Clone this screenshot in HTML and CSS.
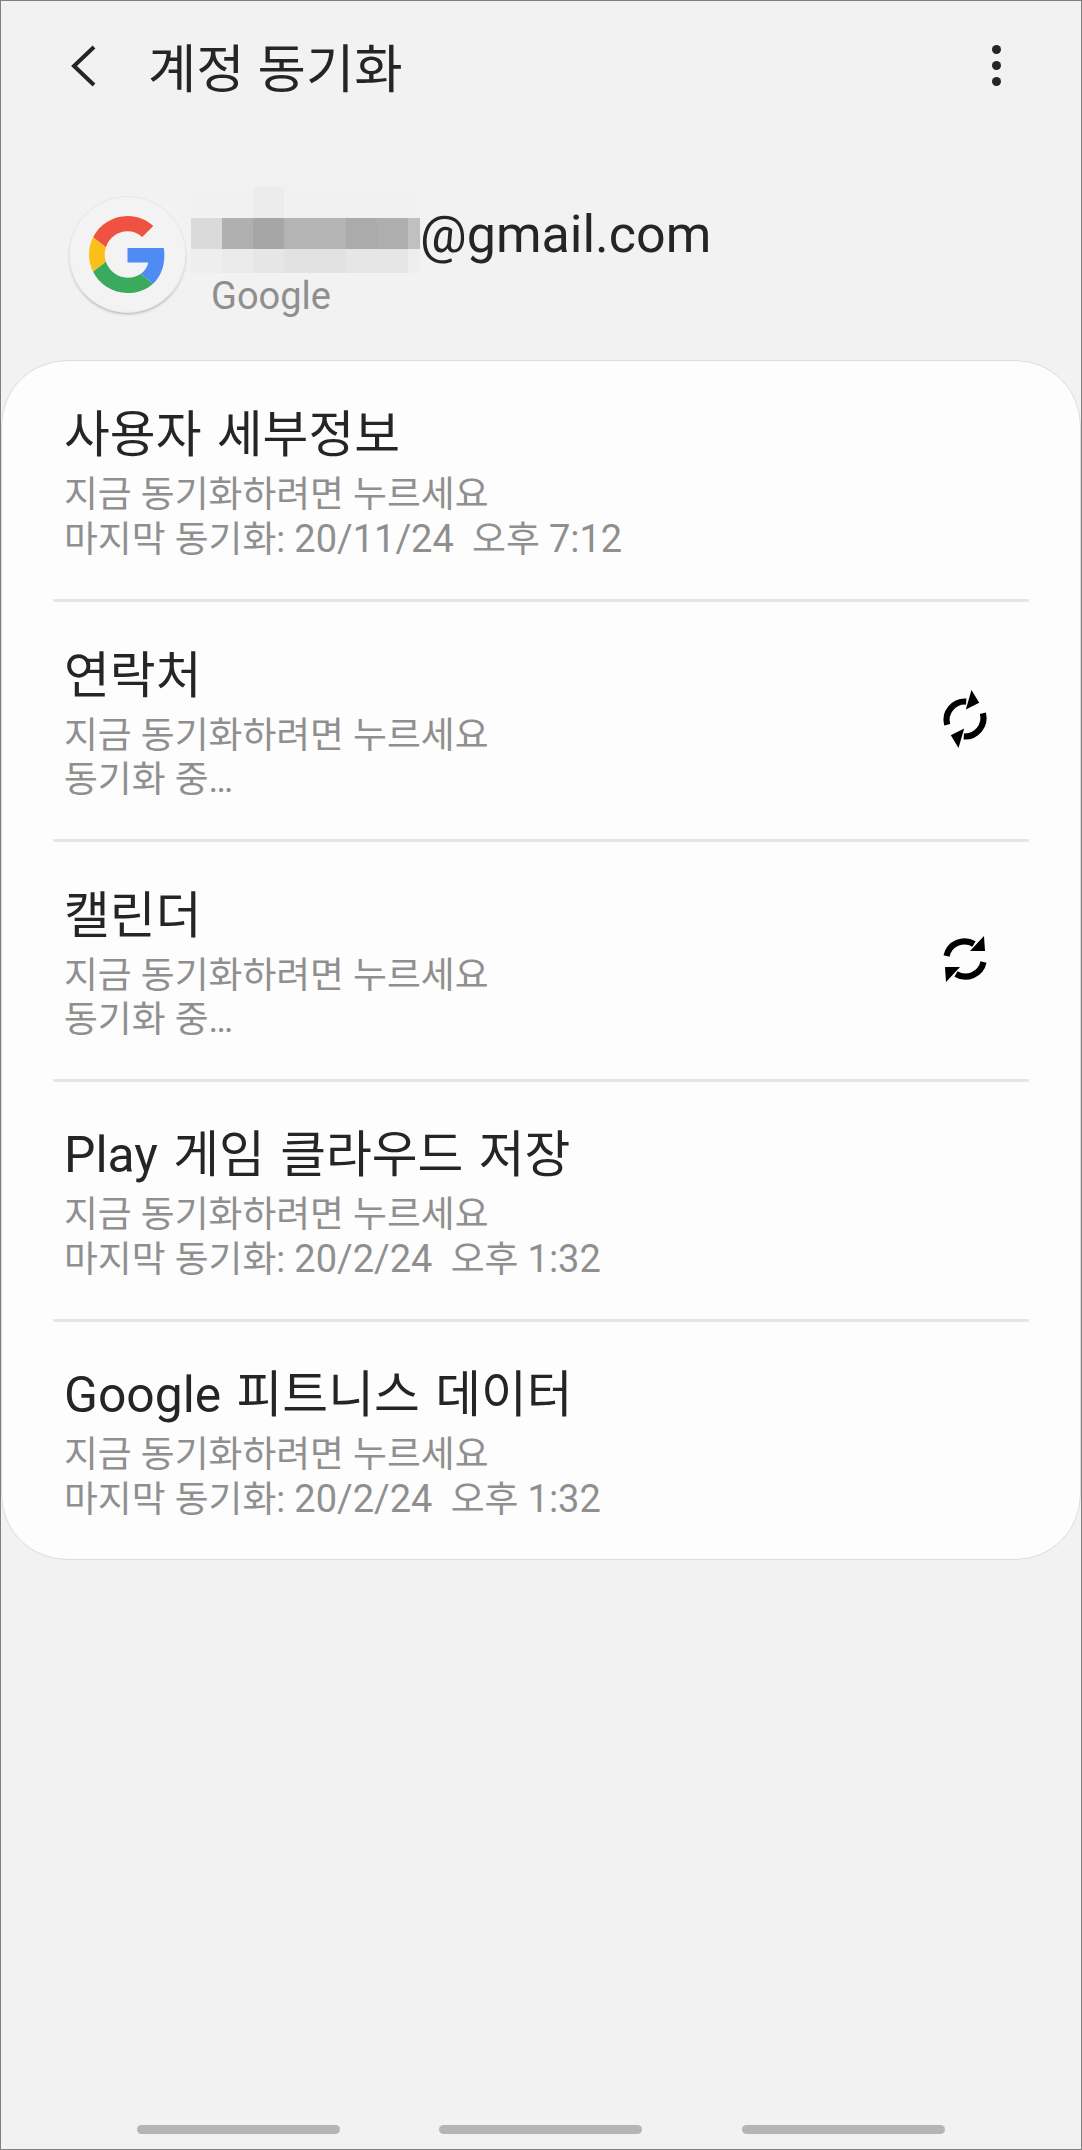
FILE: index.html
```html
<!DOCTYPE html>
<html lang="ko">
<head>
<meta charset="utf-8">
<title>계정 동기화</title>
<link rel="stylesheet" href="styles.css">
</head>
<body>
<div class="screen">
  <header class="topbar">
    <svg class="back" viewBox="0 0 28 44" width="28" height="44"><path d="M25 3 L5 22 L25 41" /></svg>
    <h1 class="page-title">계정 동기화</h1>
    <div class="more"><i></i><i></i><i></i></div>
  </header>

  <section class="account">
    <div class="avatar">
      <svg viewBox="0 0 48 48" width="77" height="77">
        <path fill="#EF5241" d="M24 9.5c3.54 0 6.71 1.22 9.21 3.6l6.85-6.85C35.9 2.38 30.47 0 24 0 14.62 0 6.51 5.38 2.56 13.22l7.98 6.19C12.43 13.72 17.74 9.5 24 9.5z"/>
        <path fill="#4F8BF5" d="M46.98 24.55c0-1.57-.15-3.09-.38-4.55H24v9.02h12.94c-.58 2.96-2.26 5.48-4.78 7.18l7.73 6c4.51-4.18 7.09-10.36 7.09-17.65z"/>
        <path fill="#FBBF1B" d="M10.53 28.59c-.48-1.45-.76-2.99-.76-4.59s.27-3.14.76-4.59l-7.98-6.19C.92 16.46 0 20.12 0 24c0 3.88.92 7.54 2.56 10.78l7.97-6.19z"/>
        <path fill="#3AAA5C" d="M24 48c6.48 0 11.93-2.13 15.89-5.81l-7.73-6c-2.15 1.45-4.92 2.3-8.16 2.3-6.26 0-11.57-4.22-13.47-9.91l-7.98 6.19C6.51 42.62 14.62 48 24 48z"/>
      </svg>
    </div>
    <div class="account-text">
      <div class="email-row">
        <div class="mosaic" aria-hidden="true">
          <b class="t0"></b><b class="t0"></b><b class="t1"></b><b class="t0"></b><b class="t0"></b><b class="t0"></b><b class="t0"></b><b class="t0"></b>
          <b class="m0"></b><b class="m1"></b><b class="m2"></b><b class="m3"></b><b class="m3"></b><b class="m4"></b><b class="m5"></b><b class="m6"></b>
          <b class="b0"></b><b class="b1"></b><b class="b2"></b><b class="b3"></b><b class="b3"></b><b class="b2"></b><b class="b2"></b><b class="b0"></b>
        </div>
        <span class="email">@gmail.com</span>
      </div>
      <div class="provider">Google</div>
    </div>
  </section>

  <main class="card">
    <div class="row">
      <div class="row-text">
        <div class="row-title">사용자 세부정보</div>
        <div class="row-sub">지금 동기화하려면 누르세요</div>
        <div class="row-sub">마지막 동기화: <span class="num">20/11/24</span>&nbsp; 오후 <span class="num">7:12</span></div>
      </div>
    </div>
    <div class="row">
      <div class="row-text">
        <div class="row-title">연락처</div>
        <div class="row-sub">지금 동기화하려면 누르세요</div>
        <div class="row-sub">동기화 중…</div>
      </div>
      <svg class="sync sync-turned" viewBox="-32 -32 64 64" width="64" height="64">
        <g><path class="arc" d="M-18.5 -3 A18.5 18.5 0 0 1 9 -15"/><path class="head" d="M19 -23 L20 -8 L5 -8 Z"/></g>
        <g transform="rotate(180)"><path class="arc" d="M-18.5 -3 A18.5 18.5 0 0 1 9 -15"/><path class="head" d="M19 -23 L20 -8 L5 -8 Z"/></g>
      </svg>
    </div>
    <div class="row">
      <div class="row-text">
        <div class="row-title">캘린더</div>
        <div class="row-sub">지금 동기화하려면 누르세요</div>
        <div class="row-sub">동기화 중…</div>
      </div>
      <svg class="sync" viewBox="-32 -32 64 64" width="64" height="64">
        <g><path class="arc" d="M-18.5 -3 A18.5 18.5 0 0 1 9 -15"/><path class="head" d="M19 -23 L20 -8 L5 -8 Z"/></g>
        <g transform="rotate(180)"><path class="arc" d="M-18.5 -3 A18.5 18.5 0 0 1 9 -15"/><path class="head" d="M19 -23 L20 -8 L5 -8 Z"/></g>
      </svg>
    </div>
    <div class="row">
      <div class="row-text">
        <div class="row-title">Play 게임 클라우드 저장</div>
        <div class="row-sub">지금 동기화하려면 누르세요</div>
        <div class="row-sub">마지막 동기화: <span class="num">20/2/24</span>&nbsp; 오후 <span class="num">1:32</span></div>
      </div>
    </div>
    <div class="row">
      <div class="row-text">
        <div class="row-title">Google 피트니스 데이터</div>
        <div class="row-sub">지금 동기화하려면 누르세요</div>
        <div class="row-sub">마지막 동기화: <span class="num">20/2/24</span>&nbsp; 오후 <span class="num">1:32</span></div>
      </div>
    </div>
  </main>

  <footer class="navbar"><i></i><i></i><i></i></footer>
</div>
</body>
</html>
```
FILE: styles.css
```css
* { box-sizing: border-box; }
html, body { margin: 0; padding: 0; }
body {
  font-family: Roboto, "Noto Sans CJK KR", sans-serif;
  background: #f2f2f2;
}
.screen {
  width: 1082px;
  height: 2150px;
  border: 1px solid #808080;
  background: #f2f2f2;
  display: flex;
  flex-direction: column;
  overflow: hidden;
}

/* top bar */
.topbar {
  height: 130px;
  display: flex;
  align-items: center;
  padding: 0 0 0 68px;
  flex: none;
}
.back { flex: none; }
.back path { fill: none; stroke: #252525; stroke-width: 4; }
.page-title {
  margin: 8px 0 0 51px;
  font-size: 52.5px;
  line-height: 60px;
  font-weight: 400;
  color: #252525;
  flex: 1;
}
.more {
  display: flex;
  flex-direction: column;
  gap: 6.5px;
  margin-right: 80px;
  margin-top: -1px;
}
.more i {
  display: block;
  width: 9.5px;
  height: 9.5px;
  border-radius: 50%;
  background: #252525;
}

/* account */
.account {
  height: 173px;
  margin-top: 56px;
  padding-left: 69px;
  display: flex;
  gap: 6px;
  flex: none;
}
.avatar {
  width: 115px;
  height: 115px;
  margin-top: 10px;
  border-radius: 50%;
  background: #f3f3f3;
  box-shadow: 0 0 0 1px #e9e9e9, 0 2px 3px rgba(0, 0, 0, .3);
  display: flex;
  align-items: center;
  justify-content: center;
  flex: none;
}
.account-text { display: flex; flex-direction: column; }
.email-row { display: flex; height: 86px; }
.mosaic {
  width: 229px;
  display: grid;
  grid-template-columns: repeat(7, 31px) 12px;
  grid-template-rows: 31px 31px 24px;
  flex: none;
}
.t0 { background: #f1f1f1; }
.t1 { background: #ececec; }
.m0 { background: #dadada; }
.m1 { background: #b0b0b0; }
.m2 { background: #a6a6a6; }
.m3 { background: #b4b4b4; }
.m4 { background: #ababab; }
.m5 { background: #aeaeae; }
.m6 { background: #c0c0c0; }
.b0 { background: #eeeeee; }
.b1 { background: #ebebeb; }
.b2 { background: #e6e6e6; }
.b3 { background: #e2e2e2; }
.email {
  font-size: 52px;
  line-height: 60px;
  color: #252525;
  margin-top: 18px;
  white-space: nowrap;
}
.provider {
  margin: 1px 0 0 20px;
  font-size: 38px;
  line-height: 44px;
  color: #8f8f8f;
}

/* list card */
.card {
  background: #fdfdfd;
  border: 1px solid #dcdcdc;
  border-radius: 66px;
  padding-top: 1px;
  flex: none;
}
.row {
  height: 240px;
  margin: 0 51px;
  padding: 0 32px 0 11px;
  display: flex;
  align-items: center;
  justify-content: space-between;
  border-bottom: 3px solid #e6e6e6;
}
.row:last-child { border-bottom: 0; height: 237px; }
.row-text { margin-top: 5px; }
.row-title {
  font-size: 49.8px;
  line-height: 62px;
  word-spacing: 3px;
  color: #252525;
  white-space: nowrap;
  margin-bottom: 7px;
}
.row-sub {
  font-size: 36.8px;
  line-height: 44px;
  color: #8f8f8f;
  white-space: nowrap;
}
.num { font-size: 38px; }
.sync { flex: none; margin-top: -3px; }
.sync-turned { transform: rotate(-27deg); }
.sync .arc { fill: none; stroke: #000; stroke-width: 6.2; }
.sync .head { fill: #000; }

/* gesture nav */
.navbar {
  margin-top: auto;
  height: 24px;
  padding-left: 136px;
  display: flex;
  gap: 99px;
  flex: none;
}
.navbar i {
  display: block;
  width: 203px;
  height: 9px;
  border-radius: 5px;
  background: #b5b5b5;
}
.navbar i:last-child { margin-left: 1px; }
```
